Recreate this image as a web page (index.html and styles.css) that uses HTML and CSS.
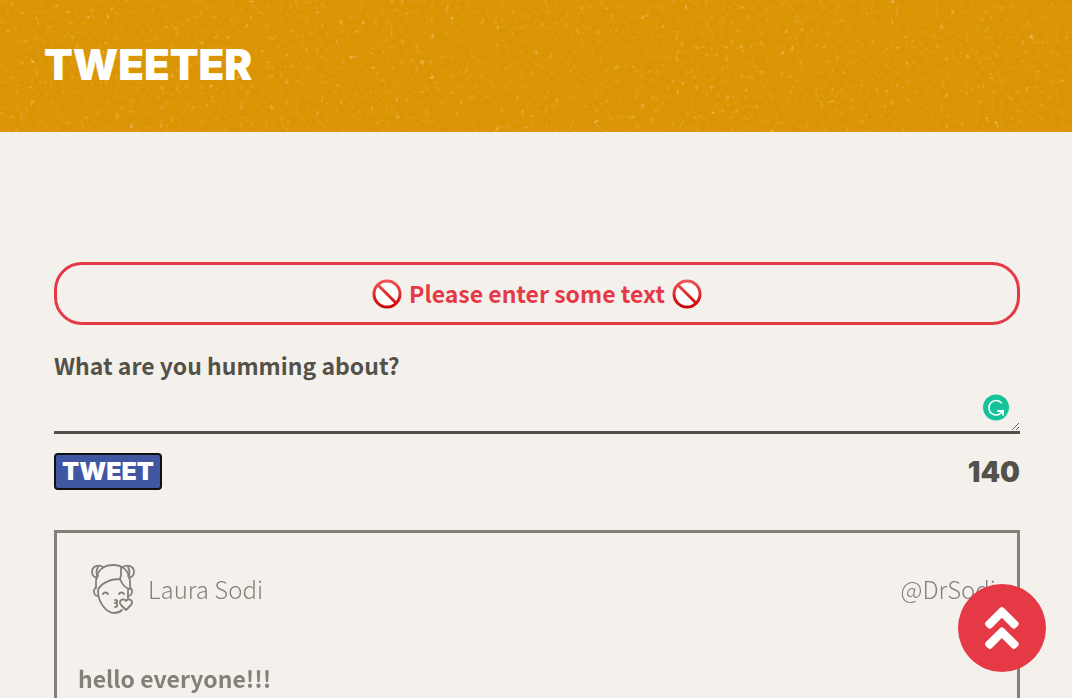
FILE: index.html
```html
<!DOCTYPE html>
<html lang="en">
<head>
<meta charset="utf-8">
<meta name="viewport" content="width=device-width, initial-scale=1">
<title>Tweeter</title>
<link rel="stylesheet" href="styles.css">
</head>
<body>
<header class="navbar">
  <svg class="navbar-texture" aria-hidden="true">
    <filter id="grain" x="0" y="0" width="100%" height="100%" color-interpolation-filters="sRGB">
      <feTurbulence type="fractalNoise" baseFrequency="0.2" numOctaves="3" seed="8" result="fine"/>
      <feColorMatrix in="fine" values="0 0 0 0 0.89  0 0 0 0 0.65  0 0 0 0 0.18  1.3 0.9 0 0 -1.16" result="soft"/>
      <feColorMatrix in="fine" values="0 0 0 0 0.93  0 0 0 0 0.72  0 0 0 0 0.34  0 2.6 3.2 0 -3.75" result="flecks"/>
      <feMerge><feMergeNode in="soft"/><feMergeNode in="flecks"/></feMerge>
    </filter>
    <rect width="100%" height="100%" filter="url(#grain)"/>
  </svg>
  <a class="logo" href="#top">TWEETER</a>
</header>
<main class="container">
  <section class="new-tweet">
    <p class="error" role="alert">
      <svg class="ban" viewBox="0 0 30 30" aria-hidden="true">
        <defs><linearGradient id="red" gradientUnits="userSpaceOnUse" x1="0" y1="0" x2="0" y2="30"><stop offset="0" stop-color="#f25a5a"/><stop offset="1" stop-color="#c90000"/></linearGradient></defs>
        <circle cx="15" cy="15" r="13" fill="#fff" stroke="url(#red)" stroke-width="3"/>
        <path d="M6 6l18 18" stroke="url(#red)" stroke-width="3"/>
      </svg>
      <span>Please enter some text</span>
      <svg class="ban" viewBox="0 0 30 30" aria-hidden="true">
        <circle cx="15" cy="15" r="13" fill="#fff" stroke="url(#red)" stroke-width="3"/>
        <path d="M6 6l18 18" stroke="url(#red)" stroke-width="3"/>
      </svg>
    </p>
    <form class="tweet-form">
      <label class="tweet-label" for="tweet-text">What are you humming about?</label>
      <div class="field">
        <textarea class="tweet-text" id="tweet-text" name="text"></textarea>
        <svg class="checker" viewBox="0 0 26 26" aria-hidden="true">
          <circle cx="13" cy="13" r="13" fill="#15c39a"/>
          <path d="M18.800 8.800A7.200 7.200 0 1 0 20 15.500" fill="none" stroke="#fff" stroke-width="1.600"/>
          <path d="M14.300 16.500H20V21" fill="none" stroke="#fff" stroke-width="1.800"/>
        </svg>
      </div>
      <div class="form-footer">
        <button class="submit" type="button">TWEET</button>
        <output class="counter" for="tweet-text">140</output>
      </div>
    </form>
  </section>
  <article class="tweet">
    <header class="tweet-header">
      <svg class="avatar" viewBox="0 0 50 50" aria-hidden="true">
        <g fill="none" stroke="currentColor" stroke-width="1.800" stroke-linecap="round" stroke-linejoin="round">
          <path d="M8 24V17C9 6 16 1 25 1s16 5 17 16v8"/>
          <path d="M10 27c0 12 9 22 16 22 3 0 6-1 8-3M40 26v8"/>
          <path d="M10 27c1-7 12-12 22-12 2 5 6 9 9 10M33 3v8l-1 4"/>
          <path d="M15 3C11 0 4 2 4 8c0 3 2 5 5 6M10 3c-2 4-2 7 0 9M35 3c4-3 11-1 11 5 0 3-2 5-5 6M40 3c2 4 2 7 0 9"/>
          <path d="M8 24c-3 0-3 8 2 8M42 24c3 0 3 8-2 8"/>
          <path d="M15 30c1-2 4-2 5 0M31 30c1-2 4-2 5 0M27 36c3 0 3 3 0 3 3 0 3 4 0 4"/>
          <path d="M38 46l-5-5c-3-4 2-8 5-4 3-4 8 0 5 4z"/>
        </g>
      </svg>
      <span class="name">Laura Sodi</span>
      <span class="handle">@DrSodi</span>
    </header>
    <p class="tweet-body">hello everyone!!!</p>
  </article>
</main>
<button class="to-top" type="button" aria-label="Back to top">
  <svg class="chevrons" viewBox="0 0 320 512" aria-hidden="true"><path fill="currentColor" d="M177 255.700l136 136c9.400 9.400 9.400 24.600 0 33.900l-22.600 22.600c-9.400 9.400-24.600 9.400-33.900 0L160 351.900l-96.400 96.400c-9.400 9.400-24.600 9.400-33.900 0L7 425.700c-9.400-9.400-9.400-24.600 0-33.900l136-136c9.400-9.500 24.600-9.500 34-.1zm-34-192L7 199.700c-9.400 9.400-9.400 24.600 0 33.900l22.600 22.600c9.400 9.400 24.600 9.400 33.900 0l96.400-96.400 96.400 96.400c9.400 9.400 24.600 9.400 33.900 0l22.600-22.600c9.400-9.400 9.400-24.600 0-33.900l-136-136c-9.200-9.400-24.400-9.400-33.800 0z"/></svg>
</button>
</body>
</html>
```
FILE: styles.css
```css
* {
  box-sizing: border-box;
}

body {
  margin: 0;
  background: #f4f1ec;
  color: #545149;
  font-family: "Noto Sans CJK JP", "Noto Sans", sans-serif;
  font-size: 23px;
  line-height: 34px;
}

.navbar {
  position: relative;
  display: flex;
  align-items: center;
  padding: 39px 44px 41px;
  background: #db9504;
}

.navbar-texture {
  position: absolute;
  inset: 0;
  width: 100%;
  height: 100%;
}

.logo {
  position: relative;
  color: #fff;
  font-family: Inter, sans-serif;
  font-size: 42px;
  font-weight: 900;
  line-height: 52px;
  text-decoration: none;
}

.container {
  padding: 130px 52px 0 54px;
}

.error {
  display: flex;
  align-items: center;
  justify-content: center;
  gap: 7px;
  margin: 0 0 24px;
  padding: 10px;
  border: 3px solid #e63946;
  border-radius: 28px;
  color: #e63946;
  font-weight: 700;
  line-height: 37px;
}

.ban {
  width: 30px;
  height: 30px;
}

.tweet-form {
  display: flex;
  flex-direction: column;
}

.tweet-label {
  font-weight: 700;
  line-height: 32px;
}

.field {
  position: relative;
  display: flex;
}

.tweet-text {
  width: 100%;
  height: 53px;
  padding: 0;
  border: 0;
  border-bottom: 3px solid #545149;
  outline: 0;
  background: transparent;
  color: inherit;
  font: inherit;
}

.checker {
  position: absolute;
  right: 11px;
  bottom: 13px;
  width: 26px;
  height: 27px;
}

.form-footer {
  display: flex;
  align-items: center;
  justify-content: space-between;
  padding: 19px 0 40px;
}

.submit {
  padding: 0 6px;
  border: 2px solid #101010;
  border-radius: 4px;
  background: #4056a1;
  color: #fff;
  font-family: Inter, sans-serif;
  font-size: 25px;
  font-weight: 900;
  line-height: 33px;
}

.counter {
  font-family: Inter, sans-serif;
  font-size: 28px;
  font-weight: 900;
}

.tweet {
  padding: 31px 21px;
  border: 3px solid #545149;
  opacity: 0.7;
}

.tweet-header {
  display: flex;
  align-items: center;
  padding: 0 0 47px 10px;
  font-size: 24px;
  font-weight: 300;
}

.avatar {
  width: 50px;
  height: 50px;
  margin-right: 10px;
}

.handle {
  margin-left: auto;
}

.tweet-body {
  margin: 0;
  font-weight: 700;
}

.to-top {
  position: fixed;
  right: 26px;
  bottom: 26px;
  display: grid;
  place-items: center;
  width: 88px;
  height: 88px;
  padding: 0;
  border: 0;
  border-radius: 50%;
  background: #e63946;
  color: #fff;
}

.chevrons {
  height: 54px;
}
```
